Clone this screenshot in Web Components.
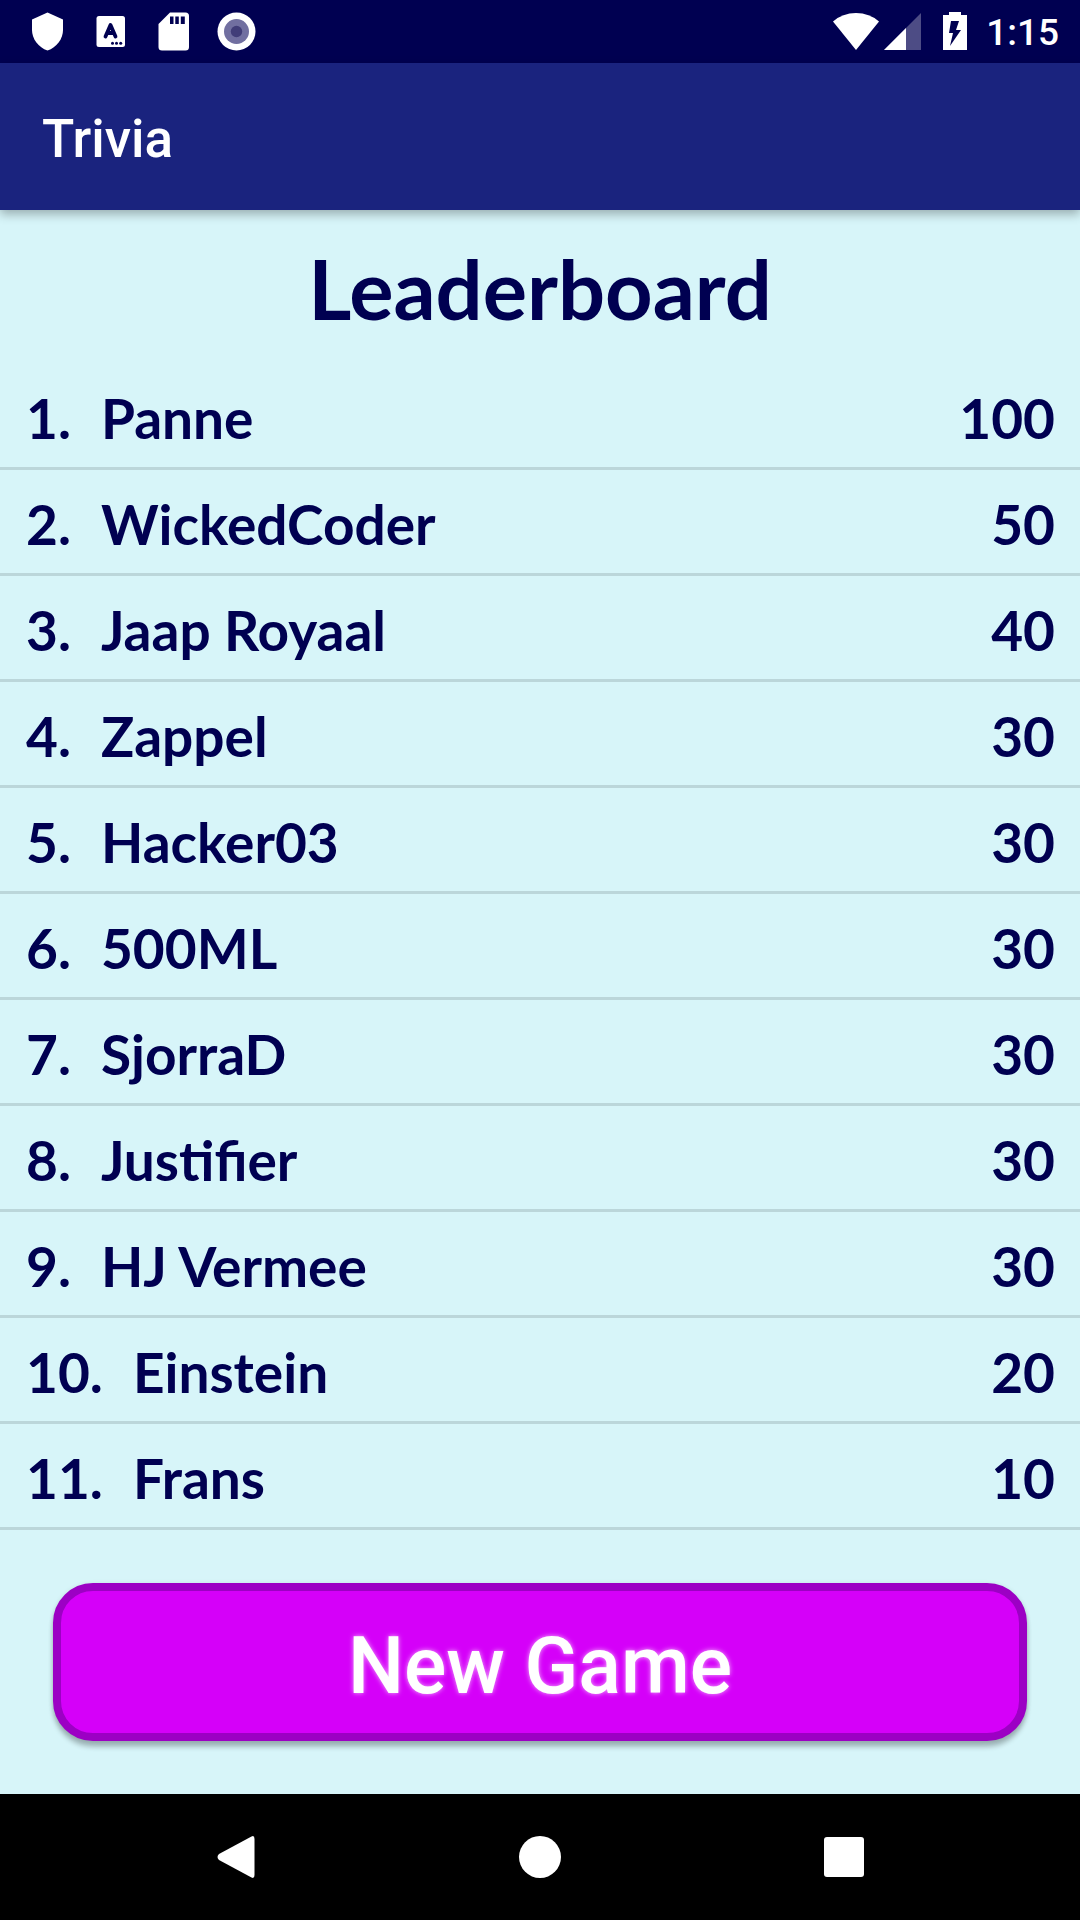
<!DOCTYPE html>
<html lang="en">
<head>
<meta charset="utf-8">
<meta name="viewport" content="width=device-width, initial-scale=1">
<title>Trivia</title>
<style>
  html, body { margin: 0; }
  body {
    background: #d7f5f9;
    font-family: Roboto, "Liberation Sans", sans-serif;
    --navy: #000051;
    --indigo: #1a237e;
    --friendly: Lato, "Noto Sans", sans-serif;
  }
</style>
</head>
<body>
<trivia-screen>
  <status-bar slot="status" time="1:15"></status-bar>
  <app-bar slot="bar">Trivia</app-bar>
  <leader-board heading="Leaderboard">
    <score-row rank="1" score="100">Panne</score-row>
    <score-row rank="2" score="50">WickedCoder</score-row>
    <score-row rank="3" score="40">Jaap Royaal</score-row>
    <score-row rank="4" score="30">Zappel</score-row>
    <score-row rank="5" score="30">Hacker03</score-row>
    <score-row rank="6" score="30">500ML</score-row>
    <score-row rank="7" score="30">SjorraD</score-row>
    <score-row rank="8" score="30">Justifier</score-row>
    <score-row rank="9" score="30">HJ Vermee</score-row>
    <score-row rank="10" score="20">Einstein</score-row>
    <score-row rank="11" score="10">Frans</score-row>
  </leader-board>
  <game-button>New Game</game-button>
  <system-nav slot="nav"></system-nav>
</trivia-screen>

<script>
const define = (name, html, fill) => customElements.define(name, class extends HTMLElement {
  constructor() {
    super();
    this.attachShadow({ mode: "open" }).innerHTML = html;
  }
  connectedCallback() { if (fill) fill(this, this.shadowRoot); }
});

define("trivia-screen", `
  <style>
    :host { display: flex; flex-direction: column; min-height: 100vh; }
    main { flex: 1; display: flex; flex-direction: column; }
  </style>
  <slot name="status"></slot>
  <slot name="bar"></slot>
  <main><slot></slot></main>
  <slot name="nav"></slot>`);

define("status-bar", `
  <style>
    :host { display: flex; justify-content: space-between; height: 63px; background: var(--navy); color: #fff; }
    div { display: flex; align-items: center; }
    .notes { padding-left: 16px; }
    .system { padding-right: 21px; }
    svg { display: block; fill: #fff; }
    .signal { margin-left: 5px; }
    .battery { margin: 0 19px 0 22px; }
    time { font-size: 37px; font-weight: 500; line-height: 44px; padding-top: 3px; }
  </style>
  <div class="notes">
    <svg width="63" height="63" aria-hidden="true"><path d="M31.5 12.5 47 19.5V30C47 39 40.500 47.500 31.500 50.500 22.500 47.500 16 39 16 30V19.500Z"/></svg>
    <svg width="63" height="63" aria-hidden="true">
      <rect x="17.500" y="16" width="28.500" height="31" rx="2.500"/>
      <path d="M26.500 36.500 31.500 25 36.500 36.500M28.500 33H34.500" fill="none" stroke="#000051" stroke-width="3.800" stroke-linecap="round" stroke-linejoin="round"/>
      <g fill="#000051"><circle cx="33.500" cy="43.300" r="1.500"/><circle cx="37.500" cy="43.300" r="1.500"/><circle cx="41.700" cy="43.300" r="1.500"/></g>
    </svg>
    <svg width="63" height="63" aria-hidden="true">
      <path d="M28 12.500H43.500Q47 12.500 47 16V47Q47 50.500 43.500 50.500H20Q16.500 50.500 16.500 47V24Z"/>
      <path fill="#000051" d="M28 16.500h3.500V24H28zM33.300 16.500h3.500V24h-3.500zM38.800 16.500h4V24h-4z"/>
    </svg>
    <svg width="63" height="63" aria-hidden="true"><circle cx="31.500" cy="31.500" r="19"/><circle cx="31.500" cy="31.500" r="12.500" fill="#716fa0"/><circle cx="31.500" cy="31.500" r="5.700" fill="#413d78"/></svg>
  </div>
  <div class="system">
    <svg width="46" height="63" aria-hidden="true"><path d="M0 21.500Q9.500 13 23 13T46 21.500L23 50Z"/></svg>
    <svg class="signal" width="37" height="63" aria-hidden="true"><path d="M0 50 37 13V50Z" fill="#4d4c85"/><path d="M0 50 22 28V50Z"/></svg>
    <svg class="battery" width="24" height="63" aria-hidden="true"><path d="M6 12H18V15H24V50H0V15H6Z"/><path fill="#000051" d="M8 21H16L13 30H18L7 46 10 33H6Z"/></svg>
    <time></time>
  </div>`,
  (el, root) => { root.querySelector("time").textContent = el.getAttribute("time"); });

define("app-bar", `
  <style>
    :host { display: flex; align-items: center; height: 147px; padding: 0 42px; background: var(--indigo); color: #fff;
            box-shadow: 0 4px 10px rgba(0, 0, 0, .3); }
    h1 { margin: 0; padding-top: 4px; font-size: 53px; font-weight: 500; line-height: 62px; }
  </style>
  <h1><slot></slot></h1>`);

define("leader-board", `
  <style>
    :host { display: block; color: var(--navy); font-family: var(--friendly); font-weight: 700; }
    h2 { margin: 0; padding: 28px 0 26px; font-size: 83px; line-height: 100px; text-align: center; }
  </style>
  <h2></h2>
  <div role="list"><slot></slot></div>`,
  (el, root) => { root.querySelector("h2").textContent = el.getAttribute("heading"); });

define("score-row", `
  <style>
    :host { display: flex; gap: 30px; padding: 19px 25px 14px 26px; border-bottom: 3px solid #bbd6da;
            font-size: 55px; line-height: 70px; }
    .score { margin-left: auto; }
  </style>
  <span class="rank"></span><span><slot></slot></span><span class="score"></span>`,
  (el, root) => {
    el.setAttribute("role", "listitem");
    root.querySelector(".rank").textContent = el.getAttribute("rank") + ".";
    root.querySelector(".score").textContent = el.getAttribute("score");
  });

define("game-button", `
  <style>
    :host { display: flex; padding: 53px; }
    button { flex: 1; box-sizing: border-box; height: 158px; padding: 8px 0 0; border: 8px solid #9c00c4; border-radius: 40px;
             background: #d500f9; color: #fff; font: 500 79px/94px Roboto, sans-serif;
             text-shadow: 0 0 5px rgba(255, 255, 255, .7);
             box-shadow: 0 6px 5px rgba(0, 0, 0, .24), 0 1px 5px rgba(0, 0, 0, .12); }
  </style>
  <button type="button"><slot></slot></button>`);

define("system-nav", `
  <style>
    :host { display: flex; height: 126px; padding: 0 84px; background: #000; }
    button { flex: 1; display: flex; align-items: center; justify-content: center; padding: 0; border: 0; background: none; }
    svg { fill: #fff; }
  </style>
  <button type="button" aria-label="Back"><svg width="42" height="42"><path d="M36.500 0.500Q39.500-1 39.500 3V39Q39.500 43 36.500 41.500L4 24Q1 21 4 18Z"/></svg></button>
  <button type="button" aria-label="Home"><svg width="42" height="42"><circle cx="21" cy="21" r="21"/></svg></button>
  <button type="button" aria-label="Overview"><svg width="42" height="42"><rect x="1" y="1" width="40" height="40" rx="3"/></svg></button>`);
</script>
</body>
</html>
